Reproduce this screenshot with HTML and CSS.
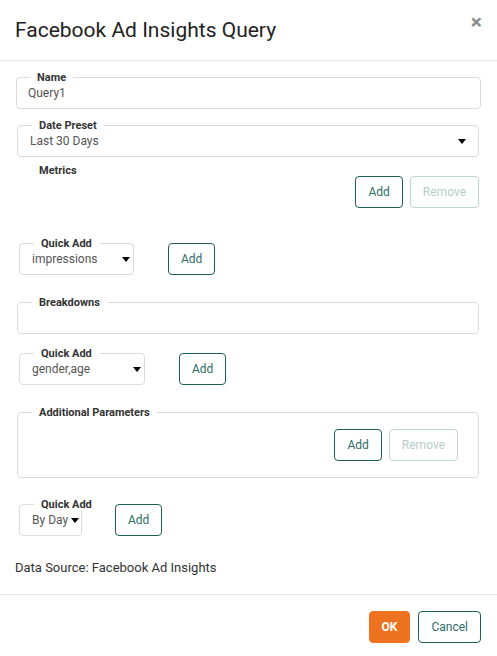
FILE: index.html
```html
<!DOCTYPE html>
<html lang="en">
<head>
<meta charset="utf-8">
<title>Facebook Ad Insights Query</title>
<link rel="stylesheet" href="styles.css">
</head>
<body>
<div class="modal">
  <header class="modal-header">
    <h1 class="modal-title">Facebook Ad Insights Query</h1>
    <button class="close" type="button" aria-label="Close">×</button>
  </header>
  <main class="modal-body">
    <fieldset class="field field-name">
      <legend>Name</legend>
      <div class="field-value">Query1</div>
    </fieldset>

    <fieldset class="field field-wide field-date">
      <legend>Date Preset</legend>
      <div class="field-value select">Last 30 Days<span class="caret"></span></div>
    </fieldset>

    <section class="metrics">
      <div class="section-label">Metrics</div>
      <div class="btn-row btn-row-metrics">
        <button class="btn btn-outline" type="button">Add</button>
        <button class="btn btn-outline disabled" type="button">Remove</button>
      </div>
    </section>

    <div class="quick-row quick-row-1">
      <fieldset class="field field-quick qa-impressions">
        <legend>Quick Add</legend>
        <div class="field-value select">impressions<span class="caret"></span></div>
      </fieldset>
      <button class="btn btn-outline btn-quick" type="button">Add</button>
    </div>

    <fieldset class="field field-wide field-breakdowns">
      <legend>Breakdowns</legend>
      <div class="field-value"></div>
    </fieldset>

    <div class="quick-row quick-row-2">
      <fieldset class="field field-quick qa-gender">
        <legend>Quick Add</legend>
        <div class="field-value select">gender,age<span class="caret"></span></div>
      </fieldset>
      <button class="btn btn-outline btn-quick" type="button">Add</button>
    </div>

    <fieldset class="field field-wide field-params">
      <legend>Additional Parameters</legend>
      <div class="btn-row btn-row-params">
        <button class="btn btn-outline" type="button">Add</button>
        <button class="btn btn-outline disabled" type="button">Remove</button>
      </div>
    </fieldset>

    <div class="quick-row quick-row-3">
      <fieldset class="field field-quick qa-day">
        <legend>Quick Add</legend>
        <div class="field-value select">By Day<span class="caret"></span></div>
      </fieldset>
      <button class="btn btn-outline btn-quick btn-quick-day" type="button">Add</button>
    </div>

    <p class="data-source">Data Source: Facebook Ad Insights</p>
  </main>
  <footer class="modal-footer">
    <button class="btn btn-primary" type="button">OK</button>
    <button class="btn btn-outline" type="button">Cancel</button>
  </footer>
</div>
</body>
</html>
```

FILE: styles.css
```css
* { box-sizing: border-box; }

html, body {
  margin: 0;
  padding: 0;
  background: #ffffff;
}

body {
  font-family: Roboto, "Liberation Sans", Arial, sans-serif;
  color: #333333;
  width: 497px;
}

.modal {
  display: flex;
  flex-direction: column;
}

/* Header */
.modal-header {
  display: flex;
  justify-content: space-between;
  align-items: flex-start;
  padding: 18px 15px;
  border-bottom: 1px solid #e5e5e5;
}

.modal-title {
  margin: 0;
  font-size: 21px;
  font-weight: 400;
  line-height: 24px;
  color: #222222;
}

.close {
  margin: -6px 0 0 0;
  padding: 0;
  border: 0;
  background: transparent;
  font-family: Roboto, "Liberation Sans", Arial, sans-serif;
  font-size: 21px;
  font-weight: 700;
  line-height: 21px;
  color: #8c8c8c;
  cursor: pointer;
}

/* Body */
.modal-body {
  padding: 10px 15px 17px;
}

.field {
  margin: 0;
  padding: 0 12px 6px;
  border: 1px solid #dcdcdc;
  border-radius: 4px;
  min-width: 0;
}

.field legend {
  margin-left: 2px;
  padding: 0 7px;
  font-size: 11px;
  font-weight: 700;
  line-height: 13px;
  color: #333333;
  white-space: nowrap;
}

.field-value {
  display: flex;
  align-items: center;
  min-height: 18px;
  font-size: 12px;
  line-height: 18px;
  color: #555555;
  white-space: nowrap;
}

.select {
  justify-content: space-between;
  gap: 3px;
}

.caret {
  flex: none;
  width: 0;
  height: 0;
  border-left: 4px solid transparent;
  border-right: 4px solid transparent;
  border-top: 5px solid #000000;
}

.field-name {
  margin: 0 1px;
  padding-left: 11px;
}

.field-wide {
  margin-left: 2px;
  margin-right: 3px;
}

.field-date {
  margin-top: 10px;
}

.metrics {
  margin-top: 8px;
}

.section-label {
  margin-left: 24px;
  height: 11px;
  font-size: 11px;
  font-weight: 700;
  line-height: 11px;
  color: #333333;
}

.btn-row {
  display: flex;
  justify-content: flex-end;
  gap: 7px;
}

.btn-row-metrics {
  margin-right: 3px;
}

.btn-row-params {
  margin: 10px 8px 16px 0;
}

.field-params {
  margin-top: 21px;
  padding-bottom: 0;
}

.quick-row {
  display: flex;
  align-items: flex-start;
  margin-left: 4px;
}

.quick-row-1 { margin-top: 29px; }
.quick-row-2 { margin-top: 13px; }
.quick-row-3 { margin-top: 20px; }

.field-quick {
  padding-right: 3px;
  flex: none;
}

.qa-impressions { width: 115px; }
.qa-gender { width: 126px; }
.qa-day { width: 63px; padding-right: 2px; }

.field-breakdowns {
  margin-top: 21px;
}

/* Buttons */
.btn {
  padding: 6px 12px;
  border: 1px solid transparent;
  border-radius: 4px;
  background: #ffffff;
  font-family: Roboto, "Liberation Sans", Arial, sans-serif;
  font-size: 12px;
  line-height: 18px;
  cursor: pointer;
  white-space: nowrap;
}

.btn-outline {
  border-color: #1d5f56;
  color: #2f6d65;
}

.btn-outline.disabled {
  border-color: #bdd6d1;
  color: #b5cdc9;
  cursor: default;
}

.btn-quick {
  margin-left: 34px;
  margin-top: 6px;
}

.btn-quick-day {
  margin-left: 33px;
}

.btn-primary {
  background: #ee7320;
  border-color: #ee7320;
  color: #ffffff;
  font-weight: 700;
}

.data-source {
  margin: 23px 0 0;
  font-size: 13px;
  line-height: 18px;
  color: #333333;
}

/* Footer */
.modal-footer {
  display: flex;
  justify-content: flex-end;
  gap: 8px;
  padding: 16px 16px 13px;
  border-top: 1px solid #e5e5e5;
}
```
